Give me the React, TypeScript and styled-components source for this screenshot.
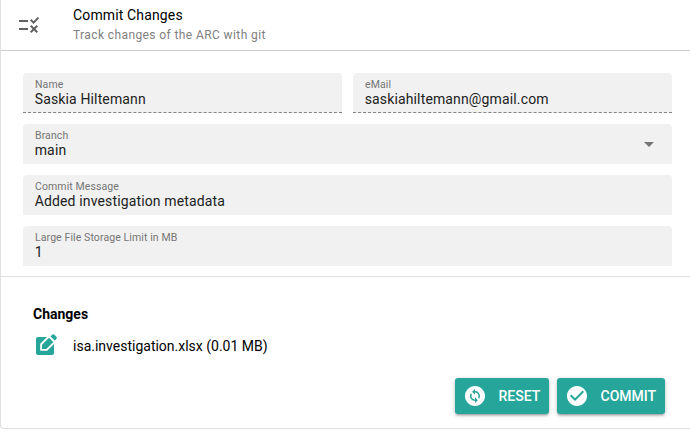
import React from 'react';
import styled, { createGlobalStyle } from 'styled-components';
import { MdRule, MdArrowDropDown, MdChangeCircle, MdCheckCircle } from 'react-icons/md';

const GlobalStyle = createGlobalStyle`
  *, *::before, *::after { box-sizing: border-box; }
  body {
    margin: 0;
    background: #fff;
    font-family: Roboto, "Liberation Sans", sans-serif;
    font-size: 14px;
    color: #000;
  }
`;

const Card = styled.main`
  height: 429px;
  border: 1px solid #e0e0e0;
  border-width: 0 0 1px 1px;
  border-bottom-left-radius: 4px;
`;

const Header = styled.header`
  display: flex;
  align-items: center;
  height: 51px;
  padding: 0 16px;
  border-bottom: 1px solid #ccc;
`;

const Avatar = styled.div`
  display: flex;
  width: 56px;
  color: #616161;
`;

const Title = styled.div`
  line-height: 17px;
  letter-spacing: 0.14px;
`;

const Subtitle = styled.div`
  margin-top: 3px;
  font-size: 12px;
  line-height: 16px;
  letter-spacing: 0.4px;
  color: #808080;
`;

const Form = styled.section`
  display: grid;
  grid-template-columns: 1fr 1fr;
  gap: 11px;
  height: 226px;
  align-content: start;
  padding: 22px 18px 0 22px;
  border-bottom: 1px solid #e0e0e0;
`;

const FieldBox = styled.label<{ $wide?: boolean; $readonly?: boolean }>`
  display: flex;
  align-items: center;
  justify-content: space-between;
  grid-column: ${(p) => (p.$wide ? '1 / -1' : 'auto')};
  height: 40px;
  padding: 0 11.5px 0 12px;
  background: #f1f1f1;
  border-radius: 4px 4px 0 0;
  border-bottom: ${(p) => (p.$readonly ? '1px dashed #858585' : '0')};
`;

const FieldText = styled.div`
  align-self: flex-start;
  padding-top: 5px;
`;

const FieldLabel = styled.div`
  font-size: 10.5px;
  line-height: 13px;
  letter-spacing: 0.1px;
  color: #757575;
`;

const FieldValue = styled.div`
  margin-left: -0.3px;
  font-size: 14px;
  line-height: 16px;
  letter-spacing: 0.14px;
  color: #212121;
`;

const Changes = styled.section`
  padding: 27px 32px 0;
`;

const ChangesTitle = styled.h2`
  margin: 0;
  font-size: 14px;
  line-height: 20px;
  font-weight: 700;
`;

const ChangeRow = styled.div`
  display: flex;
  align-items: center;
  height: 24px;
  margin-top: 10px;
  color: #26a69a;
`;

const FileName = styled.span`
  margin-left: 16px;
  color: #000;
`;

const Actions = styled.footer`
  display: flex;
  justify-content: flex-end;
  gap: 8px;
  margin-top: 20px;
  padding-right: 25px;
`;

const Button = styled.button<{ $width: number }>`
  display: flex;
  align-items: center;
  gap: 12px;
  width: ${(p) => p.$width}px;
  height: 36px;
  padding: 0 7.5px;
  border: 0;
  border-radius: 3px;
  background: #26a69a;
  color: #fff;
  font: 500 14px/24px Roboto, sans-serif;
  box-shadow: 0 1px 5px rgba(0, 0, 0, 0.2), 0 2px 2px rgba(0, 0, 0, 0.14),
    0 3px 1px -2px rgba(0, 0, 0, 0.12);
`;

const EditSquareIcon = () => (
  <svg width="24" height="24" viewBox="0 0 24 24" fill="none">
    <path
      d="M5 21a2 2 0 0 1-2-2V5a2 2 0 0 1 2-2h9L7.2 9.8V16.8h7L21 10v9a2 2 0 0 1-2 2z"
      fill="currentColor"
    />
    <path d="M9 15v-4.3L16 3.7 20.3 8l-7 7z" fill="currentColor" />
    <path
      d="m17.5 2.4 1.4-1.4a2 2 0 0 1 2.8 0l1.4 1.4a2 2 0 0 1 0 2.8l-1.4 1.4z"
      fill="currentColor"
    />
  </svg>
);

type FieldProps = {
  label: string;
  value: string;
  wide?: boolean;
  readonly?: boolean;
  children?: React.ReactNode;
};

const Field = ({ label, value, wide, readonly, children }: FieldProps) => (
  <FieldBox $wide={wide} $readonly={readonly}>
    <FieldText>
      <FieldLabel>{label}</FieldLabel>
      <FieldValue>{value}</FieldValue>
    </FieldText>
    {children}
  </FieldBox>
);

export default function App() {
  return (
    <>
      <GlobalStyle />
      <Card>
        <Header>
          <Avatar><MdRule size={24} /></Avatar>
          <div>
            <Title>Commit Changes</Title>
            <Subtitle>Track changes of the ARC with git</Subtitle>
          </div>
        </Header>
        <Form>
          <Field label="Name" value="Saskia Hiltemann" readonly />
          <Field label="eMail" value="saskiahiltemann@gmail.com" readonly />
          <Field label="Branch" value="main" wide>
            <MdArrowDropDown size={24} color="#757575" />
          </Field>
          <Field label="Commit Message" value="Added investigation metadata" wide />
          <Field label="Large File Storage Limit in MB" value="1" wide />
        </Form>
        <Changes>
          <ChangesTitle>Changes</ChangesTitle>
          <ChangeRow>
            <EditSquareIcon />
            <FileName>isa.investigation.xlsx (0.01 MB)</FileName>
          </ChangeRow>
        </Changes>
        <Actions>
          <Button $width={94}><MdChangeCircle size={24} />RESET</Button>
          <Button $width={108}><MdCheckCircle size={24} />COMMIT</Button>
        </Actions>
      </Card>
    </>
  );
}
